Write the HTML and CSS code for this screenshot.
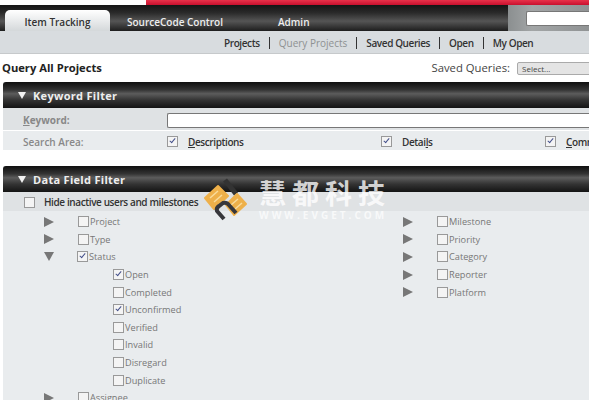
FILE: index.html
```html
<!DOCTYPE html>
<html lang="en">
<head>
    <meta charset="UTF-8">
    <title>Query All Projects</title>
    <link rel="stylesheet" href="styles.css">
</head>
<body>
    <div class="top-strip"><div class="red-band"></div></div>
    <div class="tabbar">
        <a class="tab active">Item Tracking</a>
        <a class="tab tab-source">SourceCode Control</a>
        <a class="tab tab-admin">Admin</a>
        <div class="search-box"><input type="text" class="search-input"></div>
    </div>
    <div class="subnav">
        <a>Projects</a><a class="muted">Query Projects</a><a>Saved Queries</a><a>Open</a><a>My Open</a>
    </div>
    <div class="title-row">
        <h1>Query All Projects</h1>
        <div class="saved">
            <span>Saved Queries:</span>
            <div class="select">Select...</div>
        </div>
    </div>

    <div class="section">
        <div class="section-head"><span class="tri-down white"></span>Keyword Filter</div>
        <div class="kw-row">
            <label class="kw-label"><u>K</u>eyword:</label>
            <input type="text" class="kw-input">
        </div>
        <div class="area-row">
            <span class="area-label">Search Area:</span>
            <span class="area-item area-desc"><span class="box on"></span><span><u>D</u>escriptions</span></span>
            <span class="area-item area-det"><span class="box on"></span><span>Detai<u>l</u>s</span></span>
            <span class="area-item"><span class="box on"></span><span><u>C</u>omments</span></span>
        </div>
    </div>

    <div class="section section-data">
        <div class="section-head"><span class="tri-down white"></span>Data Field Filter</div>
        <div class="hide-row"><span class="box"></span><span>Hide inactive users and milestones</span></div>
        <div class="fields">
            <div class="col">
                <div class="field"><span class="tri-right"></span><span class="box"></span>Project</div>
                <div class="field"><span class="tri-right"></span><span class="box"></span>Type</div>
                <div class="field"><span class="tri-open"></span><span class="box on"></span>Status</div>
                <div class="opt"><span class="box on"></span>Open</div>
                <div class="opt"><span class="box"></span>Completed</div>
                <div class="opt"><span class="box on"></span>Unconfirmed</div>
                <div class="opt"><span class="box"></span>Verified</div>
                <div class="opt"><span class="box"></span>Invalid</div>
                <div class="opt"><span class="box"></span>Disregard</div>
                <div class="opt"><span class="box"></span>Duplicate</div>
                <div class="field"><span class="tri-right"></span><span class="box"></span>Assignee</div>
            </div>
            <div class="col">
                <div class="field"><span class="tri-right"></span><span class="box"></span>Milestone</div>
                <div class="field"><span class="tri-right"></span><span class="box"></span>Priority</div>
                <div class="field"><span class="tri-right"></span><span class="box"></span>Category</div>
                <div class="field"><span class="tri-right"></span><span class="box"></span>Reporter</div>
                <div class="field"><span class="tri-right"></span><span class="box"></span>Platform</div>
            </div>
        </div>
    </div>

    <!-- watermark over the page -->
    <div class="watermark">
        <svg class="wm-logo" width="48" height="46" viewBox="0 0 48 46">
            <path d="M21 3 L32 17" fill="none" stroke="#333" stroke-width="5"/>
            <path d="M1 21 L14 9 L24 19 L10 32 Z" fill="#eeb04a" stroke="#eeb04a" stroke-width="2" stroke-linejoin="round"/>
            <path d="M6 21 L14 14 M10 25 L18 18" fill="none" stroke="#f9dc9c" stroke-width="1.5"/>
            <path d="M22 28 L33 17 L42 27 L30 38 Z" fill="#eeb04a" stroke="#eeb04a" stroke-width="2" stroke-linejoin="round"/>
            <path d="M27 28 L34 22 M31 32 L38 26" fill="none" stroke="#f9dc9c" stroke-width="1.5"/>
            <path d="M20 42 L13 34 Q12 31 15 29 L19 26 Q22 25 24 27 L32 36" fill="none" stroke="#37373b" stroke-width="4"/>
        </svg>
        <div class="wm-text">
            <div class="wm-cn">慧都科技</div>
            <div class="wm-en">WWW.EVGET.COM</div>
        </div>
    </div>
</body>
</html>
```

FILE: styles.css
```css
html, body {
    margin: 0;
    padding: 0;
    height: 400px;
    overflow: hidden;
    background: #fff;
    font-family: "Open Sans", "Noto Sans", sans-serif;
    font-size: 10px;
    color: #333;
}
.top-strip {
    height: 5px;
    background: #fff;
    display: flex;
}
.red-band {
    margin-left: 146px;
    flex: 1;
    background: linear-gradient(#e8324a, #c8102e);
}
.tabbar {
    height: 26px;
    background: linear-gradient(#151515 0, #2a2a2a 30%, #555 62%, #1e1e1e 100%);
    display: flex;
    align-items: flex-end;
}
.tab {
    color: #eee;
    font-weight: 600;
    height: 21px;
    line-height: 24px;
    text-align: center;
}
.tab.active {
    margin-left: 5px;
    width: 105px;
    background: linear-gradient(#fff, #d4d8da);
    color: #333;
    border-radius: 5px 5px 0 0;
}
.tab-source {
    margin-left: 17px;
}
.tab-admin {
    margin-left: 55px;
}
.search-box {
    margin-left: auto;
    width: 81px;
    height: 26px;
    background: linear-gradient(90deg, #8b8f90, #a2a5a6 30%, #909394);
    display: flex;
    align-items: center;
    justify-content: flex-end;
}
.search-input {
    width: 62px;
    height: 13px;
    padding: 0;
    border: 1px solid #777;
    border-right: 0;
    border-radius: 2px 0 0 2px;
    background: #fff;
}
.subnav {
    height: 23px;
    background: #d8dcdf;
    border-bottom: 1px solid #c6c9cb;
    box-sizing: border-box;
    padding-left: 224px;
    padding-top: 2px;
    display: flex;
    align-items: center;
}
.subnav a {
    font-weight: 600;
    letter-spacing: -0.4px;
    color: #333;
    padding: 0 9px;
    line-height: 12px;
    border-left: 1px solid #333;
    white-space: nowrap;
}
.subnav a:first-child {
    border-left: 0;
    padding-left: 0;
}
.subnav a.muted {
    font-weight: 400;
    letter-spacing: 0;
    color: #8e9192;
}
.title-row {
    height: 28px;
    display: flex;
    align-items: center;
    justify-content: space-between;
    padding-left: 2px;
    padding-bottom: 2px;
    box-sizing: border-box;
    white-space: nowrap;
}
.title-row h1 {
    margin: 0;
    font-size: 11.2px;
    font-weight: 700;
    color: #222;
}
.saved {
    display: flex;
    align-items: center;
    gap: 7px;
    font-size: 11.3px;
    color: #444;
}
.select {
    width: 72px;
    height: 11px;
    margin-top: 2px;
    margin-right: -6px;
    font-size: 8px;
    line-height: 11px;
    padding-left: 4px;
    border: 1px solid #aaa;
    border-radius: 2px;
    background: #e4e4e4;
}
.section {
    margin-left: 3px;
    background: #e9ecee;
}
.section-data {
    margin-top: 16px;
    height: 234px;
}
.section-head {
    height: 26px;
    border-radius: 3px 0 0 0;
    background: linear-gradient(#0f0f0f 0, #333 30%, #5c5c5c 45%, #333 70%, #141414 100%);
    color: #eee;
    font-size: 11px;
    font-weight: 700;
    display: flex;
    align-items: center;
    padding-left: 15px;
    letter-spacing: 0.3px;
}
.tri-down {
    display: inline-block;
    border-left: 4px solid transparent;
    border-right: 4px solid transparent;
    border-top: 7px solid #777;
}
.tri-down.white {
    border-top-color: #f2f2f2;
    margin-right: 7px;
}
.kw-row {
    height: 23px;
    padding-top: 2px;
    background: #dfe2e4;
    display: flex;
    align-items: center;
    border-bottom: 1px solid #fff;
    box-sizing: border-box;
}
.kw-label {
    width: 164px;
    padding-left: 20px;
    box-sizing: border-box;
    font-weight: 700;
    color: #888;
}
.kw-input {
    flex: 1;
    height: 13px;
    padding: 0;
    border: 1px solid #777;
    border-right: 0;
    border-radius: 2px 0 0 2px;
    background: #fff;
}
.area-row {
    height: 19px;
    display: flex;
    align-items: center;
    white-space: nowrap;
    overflow: hidden;
    padding-top: 2px;
    box-sizing: border-box;
}
.area-label {
    flex: none;
    width: 164px;
    padding-left: 20px;
    box-sizing: border-box;
    font-weight: 600;
    color: #888;
}
.area-item {
    flex: none;
    display: flex;
    align-items: center;
    gap: 10px;
    font-weight: 600;
    letter-spacing: -0.4px;
    color: #333;
}
.area-desc {
    width: 214px;
}
.area-det {
    width: 164px;
}
.box {
    display: inline-block;
    flex: none;
    width: 9px;
    height: 9px;
    border: 1px solid #999;
    background: #f4f4f4;
    position: relative;
}
.box.on::after {
    content: "";
    position: absolute;
    left: 3px;
    top: 0;
    width: 2px;
    height: 5px;
    border: solid #44508a;
    border-width: 0 1.5px 1.5px 0;
    transform: rotate(40deg);
}
.hide-row {
    height: 19px;
    padding-top: 1px;
    box-sizing: border-box;
    background: #dfe2e4;
    display: flex;
    align-items: center;
    gap: 9px;
    padding-left: 21px;
    font-weight: 600;
    letter-spacing: -0.4px;
    color: #333;
    white-space: nowrap;
}
.fields {
    display: flex;
    padding-top: 2px;
}
.col {
    width: 360px;
    color: #777;
    font-size: 9.2px;
}
.col:last-child {
    width: auto;
}
.field {
    height: 17.6px;
    display: flex;
    align-items: center;
    padding-left: 41px;
}
.field .box {
    margin-right: 1px;
}
.col:last-child .field {
    padding-left: 40px;
}
.opt {
    height: 17.6px;
    display: flex;
    align-items: center;
    padding-left: 110px;
    gap: 1px;
}
.tri-right {
    width: 0;
    height: 0;
    border-top: 5px solid transparent;
    border-bottom: 5px solid transparent;
    border-left: 10px solid #777;
    margin-right: 24px;
}
.tri-open {
    width: 0;
    height: 0;
    border-left: 5.5px solid transparent;
    border-right: 5.5px solid transparent;
    border-top: 9px solid #777;
    margin-right: 23px;
}
.watermark {
    position: absolute;
    left: 204px;
    top: 177px;
    display: flex;
    gap: 7px;
}
.wm-logo {
    display: block;
}
.wm-cn {
    font-family: "Noto Sans CJK SC", sans-serif;
    font-size: 27px;
    font-weight: 700;
    line-height: 32px;
    letter-spacing: 6px;
    color: rgba(255, 255, 255, 0.8);
    white-space: nowrap;
}
.wm-en {
    margin-top: 1px;
    font-size: 10px;
    font-weight: 700;
    line-height: 10px;
    letter-spacing: 3px;
    color: rgba(255, 255, 255, 0.7);
    white-space: nowrap;
}
```
